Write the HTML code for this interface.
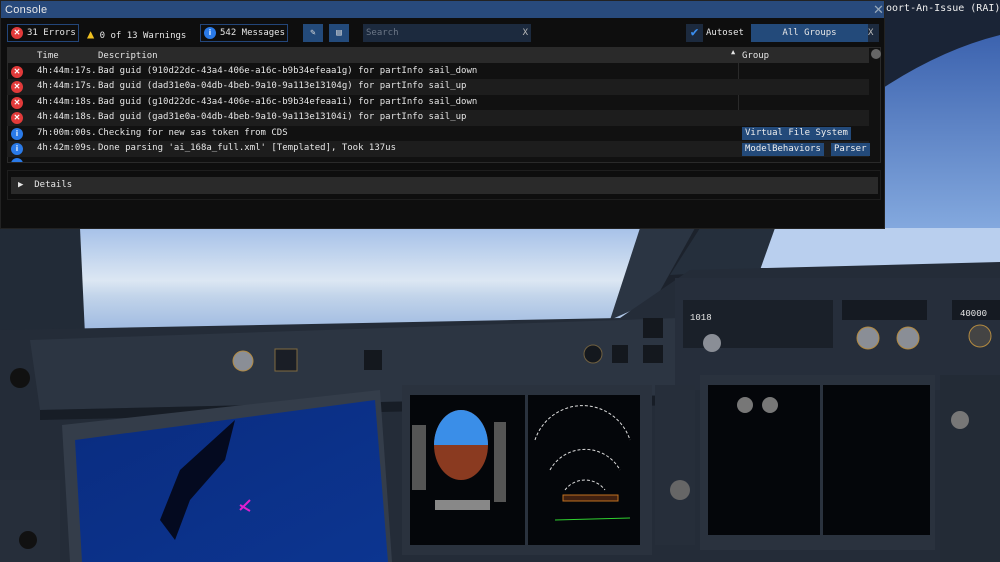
<!DOCTYPE html>
<html><head><meta charset="utf-8"><style>
*{margin:0;padding:0;box-sizing:border-box}
body{width:1000px;height:562px;overflow:hidden;position:relative;background:#1d2430;font-family:"DejaVu Sans Mono","Liberation Mono",monospace;font-size:9px;color:#e6e6e6}
svg.bg{position:absolute;left:0;top:0}
.win{position:absolute;left:0;top:0;width:885px;height:229px;background:#0e0e0e;border:1px solid #222}
.title{height:17px;background:#284a7c;color:#e8e8e8;font-family:"Liberation Sans",sans-serif;font-size:11px;padding:3px 4px;letter-spacing:.3px}
.abs{position:absolute}
.btn{position:absolute;top:23px;height:18px;border:1px solid #23467a;background:#0e0e0e;display:flex;align-items:center;padding-left:3px;white-space:nowrap}
.ic{width:12px;height:12px;border-radius:50%;display:inline-block;color:#fff;font-size:8px;text-align:center;line-height:12px;margin-right:4px;font-family:"Liberation Sans",sans-serif;font-weight:bold}
.er{background:#e23a3a}.inf{background:#2a7ae8}
.row{position:absolute;left:6px;width:862px;height:15.5px;line-height:15px;white-space:nowrap}
.row span{position:absolute}
.tag{position:absolute;background:#234a7a;height:13px;line-height:13px;padding:0 3px;color:#eee}
</style></head><body>
<svg class="bg" width="1000" height="562" viewBox="0 0 1000 562">
<defs>
<linearGradient id="sky" x1="0" y1="0" x2="0" y2="1"><stop offset="0" stop-color="#a6c1e8"/><stop offset=".5" stop-color="#dce7f3"/><stop offset=".65" stop-color="#c2d4ea"/><stop offset="1" stop-color="#9cb8e0"/></linearGradient>
<linearGradient id="sky2" x1="0" y1="0" x2="0" y2="1"><stop offset="0" stop-color="#2f56a6"/><stop offset="1" stop-color="#8fb4e6"/></linearGradient>
<linearGradient id="nd" x1="0" y1="0" x2="1" y2="1"><stop offset="0" stop-color="#0a2c80"/><stop offset="1" stop-color="#0c3590"/></linearGradient>
</defs>
<rect width="1000" height="562" fill="#1c222c"/>
<rect x="880" y="0" width="120" height="260" fill="url(#sky2)"/>
<path d="M880 90 Q940 50 1000 35 L1000 0 L880 0 Z" fill="#1a2436"/>
<rect x="78" y="228" width="580" height="105" fill="url(#sky)"/>
<rect x="760" y="228" width="240" height="40" fill="#b9cfee"/>
<path d="M0 228 L80 228 L85 335 L0 340 Z" fill="#222b37"/>
<path d="M660 228 L695 228 L655 300 L610 320 L640 228 Z" fill="#2b3543"/>
<path d="M700 228 L775 228 L760 270 L670 275 Z" fill="#252f3c"/>
<path d="M0 330 L620 318 L690 270 L1000 262 L1000 562 L0 562 Z" fill="#242c38"/>
<path d="M30 340 L680 318 L680 395 L40 410 Z" fill="#2c3542"/>
<path d="M40 410 L680 395 L680 405 L40 420 Z" fill="#171d26"/>
<rect x="675" y="278" width="325" height="112" fill="#262e3b"/>
<rect x="683" y="300" width="150" height="48" fill="#1a2029"/>
<rect x="842" y="300" width="85" height="20" fill="#151a22"/>
<rect x="952" y="300" width="48" height="20" fill="#151a22"/>
<text x="690" y="320" font-size="9" fill="#e8e8e8" font-family="Liberation Mono">1018</text>
<text x="960" y="316" font-size="9" fill="#e8e8e8" font-family="Liberation Mono">40000</text>
<circle cx="243" cy="361" r="10" fill="#8a8e96" stroke="#b38a40"/>
<rect x="275" y="349" width="22" height="22" fill="#1a1e26" stroke="#806a40"/>
<rect x="364" y="350" width="18" height="20" fill="#14181e"/>
<circle cx="593" cy="354" r="9" fill="#14181e" stroke="#706040"/>
<rect x="612" y="345" width="16" height="18" fill="#14181e"/>
<rect x="643" y="318" width="20" height="20" fill="#14181e"/>
<rect x="643" y="345" width="20" height="18" fill="#14181e"/>
<circle cx="712" cy="343" r="9" fill="#8a8e96"/>
<circle cx="868" cy="338" r="11" fill="#8a8e96" stroke="#b38a40"/>
<circle cx="908" cy="338" r="11" fill="#8a8e96" stroke="#b38a40"/>
<circle cx="980" cy="336" r="11" fill="#444" stroke="#b38a40"/>
<circle cx="20" cy="378" r="10" fill="#111"/>
<path d="M62 425 L380 390 L392 562 L70 562 Z" fill="#343d4a"/>
<path d="M75 440 L375 400 L388 562 L82 562 Z" fill="url(#nd)"/>
<path d="M180 470 L235 420 L225 460 L190 500 L175 540 L160 520 Z" fill="#040a20"/>
<path d="M240 505 l10 6 M250 500 l-10 10" stroke="#e020d0" stroke-width="2"/>
<rect x="402" y="385" width="250" height="170" fill="#2a323e"/>
<rect x="410" y="395" width="115" height="150" fill="#04060a"/>
<rect x="528" y="395" width="112" height="150" fill="#04060a"/>
<ellipse cx="461" cy="445" rx="27" ry="35" fill="#8a3a20"/>
<path d="M434 445 A27 35 0 0 1 488 445 Z" fill="#3a8ee8"/>
<rect x="412" y="425" width="14" height="65" fill="#555"/>
<rect x="494" y="422" width="12" height="80" fill="#555"/>
<rect x="435" y="500" width="55" height="10" fill="#888"/>
<path d="M535 440 A50 50 0 0 1 630 440" stroke="#ddd" fill="none" stroke-dasharray="3 2"/>
<path d="M550 470 A40 40 0 0 1 620 470" stroke="#ddd" fill="none" stroke-dasharray="3 2"/>
<path d="M565 490 A25 25 0 0 1 605 490" stroke="#ddd" fill="none" stroke-dasharray="3 2"/>
<rect x="563" y="495" width="55" height="6" fill="#402010" stroke="#c07020"/>
<path d="M555 520 L630 518" stroke="#30d030"/>
<rect x="655" y="385" width="40" height="160" fill="#262e3a"/>
<circle cx="680" cy="490" r="10" fill="#666"/>
<rect x="700" y="375" width="235" height="175" fill="#2a323e"/>
<rect x="708" y="385" width="112" height="150" fill="#04060a"/>
<rect x="823" y="385" width="107" height="150" fill="#04060a"/>
<circle cx="745" cy="405" r="8" fill="#777"/><circle cx="770" cy="405" r="8" fill="#777"/>
<rect x="0" y="480" width="60" height="82" fill="#262e3a"/>
<circle cx="28" cy="540" r="9" fill="#111"/>
<rect x="940" y="375" width="60" height="187" fill="#232b36"/>
<circle cx="960" cy="420" r="9" fill="#777"/>
</svg>

<div class="win">
<div class="title">Console</div>
<div class="abs" style="left:872px;top:1px;color:#9ab;font-size:13px;font-family:'Liberation Sans'">✕</div>
<div class="btn" style="left:6px;width:72px"><span class="ic er">✕</span>31 Errors</div>
<div class="abs" style="left:86px;top:26px;white-space:nowrap"><span style="color:#f0c020;font-size:12px">▲</span> 0 of 13 Warnings</div>
<div class="btn" style="left:199px;width:88px"><span class="ic inf">i</span>542 Messages</div>
<div class="abs" style="left:302px;top:23px;width:20px;height:18px;background:#234a7a;color:#ddd;text-align:center;line-height:18px">✎</div>
<div class="abs" style="left:328px;top:23px;width:20px;height:18px;background:#234a7a;color:#ddd;text-align:center;line-height:18px">▤</div>
<div class="abs" style="left:362px;top:23px;width:168px;height:18px;background:#1c2a3e;color:#6b7686;line-height:18px;padding-left:3px">Search<span style="position:absolute;right:3px;color:#bbb">X</span></div>
<div class="abs" style="left:685px;top:23px;width:17px;height:18px;background:#1c2a3e;color:#3a8ef0;text-align:center;line-height:18px;font-size:13px">✔</div>
<div class="abs" style="left:705px;top:27px">Autoset</div>
<div class="abs" style="left:750px;top:23px;width:117px;height:18px;background:#234a7a;text-align:center;line-height:18px">All Groups</div>
<div class="abs" style="left:867px;top:23px;width:11px;height:18px;background:#1c2a3e;line-height:18px;color:#bbb">X</div>
<div class="abs" style="left:6px;top:46px;width:874px;height:116px;border:1px solid #2a2a2a;background:#111"></div>
<div class="abs" style="left:6px;top:47px;width:862px;height:15px;background:#2a2a2a"></div>
<div class="abs" style="left:36px;top:50px">Time</div>
<div class="abs" style="left:97px;top:50px">Description</div>
<div class="abs" style="left:730px;top:47px;font-size:7px">▲</div>
<div class="abs" style="left:741px;top:50px">Group</div>
<div class="abs" style="left:870px;top:48px;width:10px;height:10px;border-radius:50%;background:#666"></div>
<div class="abs" style="left:737px;top:62px;width:1px;height:62px;background:#2a2a2a"></div>
<div class="row" style="top:63px"><span class="ic er" style="left:4px;top:2px">✕</span><span style="left:30px">4h:44m:17s.</span><span style="left:91px">Bad guid (910d22dc-43a4-406e-a16c-b9b34efeaa1g) for partInfo sail_down</span></div>
<div class="row" style="top:78px;background:#1d1d1d"><span class="ic er" style="left:4px;top:2px">✕</span><span style="left:30px">4h:44m:17s.</span><span style="left:91px">Bad guid (dad31e0a-04db-4beb-9a10-9a113e13104g) for partInfo sail_up</span></div>
<div class="row" style="top:94px"><span class="ic er" style="left:4px;top:2px">✕</span><span style="left:30px">4h:44m:18s.</span><span style="left:91px">Bad guid (g10d22dc-43a4-406e-a16c-b9b34efeaa1i) for partInfo sail_down</span></div>
<div class="row" style="top:109px;background:#1d1d1d"><span class="ic er" style="left:4px;top:2px">✕</span><span style="left:30px">4h:44m:18s.</span><span style="left:91px">Bad guid (gad31e0a-04db-4beb-9a10-9a113e13104i) for partInfo sail_up</span></div>
<div class="row" style="top:125px"><span class="ic inf" style="left:4px;top:2px">i</span><span style="left:30px">7h:00m:00s.</span><span style="left:91px">Checking for new sas token from CDS</span></div>
<div class="row" style="top:140px;background:#1d1d1d"><span class="ic inf" style="left:4px;top:2px">i</span><span style="left:30px">4h:42m:09s.</span><span style="left:91px">Done parsing 'ai_168a_full.xml' [Templated], Took 137us</span></div>
<div class="tag" style="left:741px;top:126px">Virtual File System</div>
<div class="tag" style="left:741px;top:142px">ModelBehaviors</div>
<div class="tag" style="left:830px;top:142px">Parser</div>
<div class="abs" style="left:6px;top:157px;width:862px;height:4px;overflow:hidden"><span class="ic inf" style="margin-left:4px"></span></div>
<div class="abs" style="left:6px;top:169px;width:874px;height:30px;border:1px solid #1e1e1e"></div>
<div class="abs" style="left:10px;top:176px;width:867px;height:17px;background:#2a2a2a;line-height:17px;padding-left:7px"><span style="font-size:9px">▶</span>&nbsp; Details</div>
</div>
<div class="abs" style="left:886px;top:3px;color:#eee;font-size:10px;white-space:nowrap">oort-An-Issue (RAI)</div>
</body></html>
